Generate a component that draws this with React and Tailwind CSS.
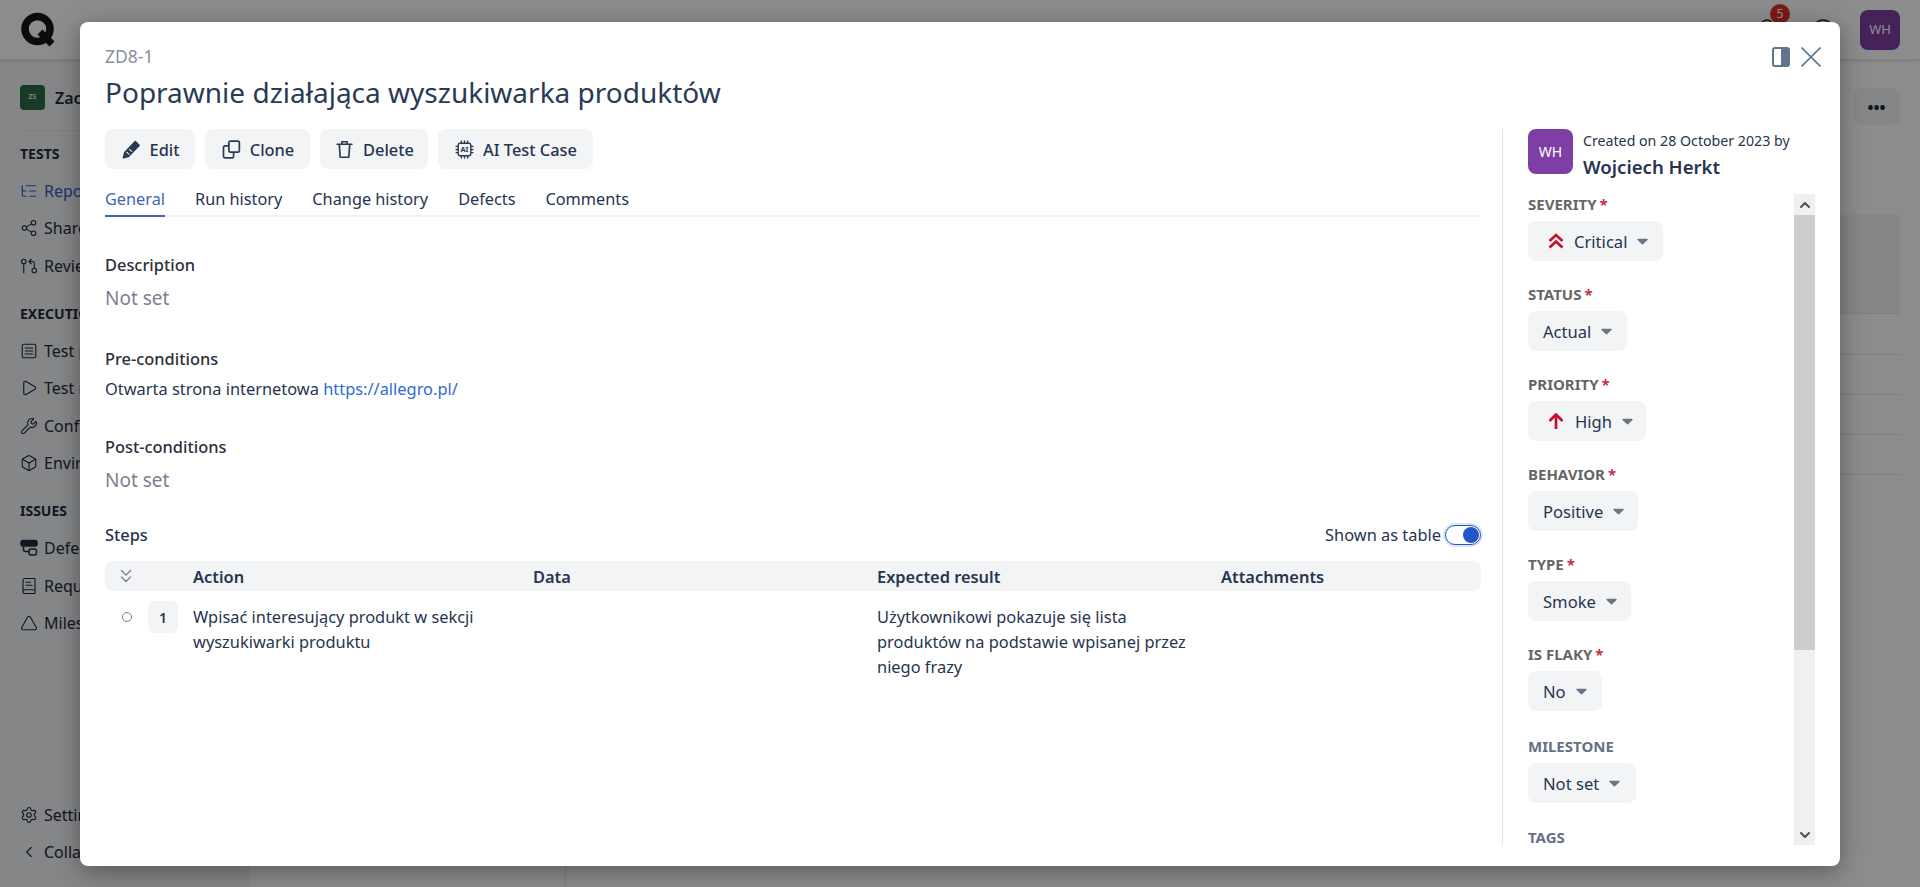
import React from "react";
import {
  ListTree,
  GitPullRequestArrow,
  SquareMenu,
  Play,
  Wrench,
  Box,
  BookText,
  Triangle,
  Settings,
  ChevronLeft,
  ChevronUp,
  ChevronDown,
  ChevronsDown,
  Share2,
  Bell,
  CircleHelp,
} from "lucide-react";

const DefectsIcon = ({ size, strokeWidth }) => (
  <svg width={size} height={size} viewBox="0 0 18 18" fill="none" stroke="currentColor" strokeWidth={strokeWidth}>
    <rect x="1" y="1.5" width="16" height="5.5" rx="2" fill="currentColor" />
    <path d="M3.5 7v3.5a2 2 0 0 0 2 2H9" />
    <rect x="9" y="10" width="7.5" height="6" rx="2" />
  </svg>
);

const navGroups = [
  {
    title: "TESTS",
    items: [
      { label: "Repository", Icon: ListTree, active: true },
      { label: "Shared steps", Icon: Share2 },
      { label: "Review", Icon: GitPullRequestArrow },
    ],
  },
  {
    title: "EXECUTION",
    items: [
      { label: "Test plans", Icon: SquareMenu },
      { label: "Test runs", Icon: Play },
      { label: "Configurations", Icon: Wrench },
      { label: "Environments", Icon: Box },
    ],
  },
  {
    title: "ISSUES",
    items: [
      { label: "Defects", Icon: DefectsIcon },
      { label: "Requirements", Icon: BookText },
      { label: "Milestones", Icon: Triangle },
    ],
  },
];

const fields = [
  { label: "SEVERITY", value: "Critical", required: true, icon: "critical", width: "w-[135px]", gap: "mb-[22px]" },
  { label: "STATUS", value: "Actual", required: true, width: "w-[99px]", gap: "mb-[22px]" },
  { label: "PRIORITY", value: "High", required: true, icon: "high", width: "w-[118px]", gap: "mb-[22px]" },
  { label: "BEHAVIOR", value: "Positive", required: true, width: "w-[110px]", gap: "mb-[22px]" },
  { label: "TYPE", value: "Smoke", required: true, width: "w-[103px]", gap: "mb-[22px]" },
  { label: "IS FLAKY", value: "No", required: true, width: "w-[74px]", gap: "mb-[24px]" },
  { label: "MILESTONE", value: "Not set", width: "w-[108px]", gap: "mb-[23px]" },
];

const QLogo = () => (
  <svg width="36" height="36" viewBox="0 0 36 36" fill="none" stroke="#141414">
    <circle cx="17.5" cy="17" r="12.5" strokeWidth="7.5" />
    <path d="M20 20l12 12" strokeWidth="7" />
  </svg>
);

const PencilIcon = () => (
  <svg width="21" height="21" viewBox="0 0 20 20" fill="none" stroke="#2b3a55" strokeWidth="1.6" strokeLinejoin="round">
    <path d="M13.6 2.4l3.6 3.6L7 16.6 2.4 17.8 3.6 13z" fill="#2b3a55" />
    <path d="M5.2 12.2l2.8 2.8M8 9.6l2.4 2.4" stroke="#f3f4f6" strokeWidth="1" />
  </svg>
);

const CloneIcon = () => (
  <svg width="21" height="21" viewBox="0 0 20 20" fill="none" stroke="#2b3a55" strokeWidth="1.6" strokeLinejoin="round">
    <rect x="7.5" y="2" width="10" height="10.5" rx="1.6" />
    <path d="M7.5 6.5H4a1.6 1.6 0 0 0-1.6 1.6v8.2A1.6 1.6 0 0 0 4 18h6.4a1.6 1.6 0 0 0 1.6-1.6v-3.9" />
  </svg>
);

const TrashIcon = () => (
  <svg width="21" height="21" viewBox="0 0 20 20" fill="none" stroke="#2b3a55" strokeWidth="1.6" strokeLinecap="round" strokeLinejoin="round">
    <path d="M3 5h14M7.5 5V2.6h5V5M5 5l.9 12.4h8.2L15 5" />
  </svg>
);

const ChipIcon = () => (
  <svg width="21" height="21" viewBox="0 0 20 20" fill="none" stroke="#2b3a55" strokeWidth="1.3">
    <rect x="4" y="4" width="12" height="12" rx="2" />
    <path d="M7 1.5V4M10 1.5V4M13 1.5V4M7 16v2.5M10 16v2.5M13 16v2.5M1.5 7H4M1.5 10H4M1.5 13H4M16 7h2.5M16 10h2.5M16 13h2.5" />
    <text x="10" y="12.6" textAnchor="middle" fontSize="7" fontWeight="700" fill="#2b3a55" stroke="none" fontFamily="Noto Sans, sans-serif">AI</text>
  </svg>
);

const CriticalIcon = () => (
  <svg width="16" height="16" viewBox="0 0 16 16" fill="none" stroke="#c8102e" strokeWidth="2.7" className="shrink-0">
    <path d="M1.5 8L8 2l6.5 6M1.5 14.5L8 8.5l6.5 6" />
  </svg>
);

const HighIcon = () => (
  <svg width="16" height="16" viewBox="0 0 16 16" fill="none" stroke="#c8102e" strokeWidth="2.7" className="shrink-0">
    <path d="M8 16V1.5M1.5 8L8 1.5 14.5 8" />
  </svg>
);

const CloseIcon = () => (
  <svg width="20" height="20" viewBox="0 0 20 20" fill="none" stroke="#5f7590" strokeWidth="1.6">
    <path d="M0.5 0.5l19 19M19.5 0.5l-19 19" />
  </svg>
);

const Caret = () => (
  <svg width="11" height="7" viewBox="0 0 11 7" className="shrink-0">
    <path d="M1 0.8h9a.7.7 0 0 1 .5 1.2L6 6.3a.7.7 0 0 1-1 0L.5 2A.7.7 0 0 1 1 .8z" fill="#6b7588" />
  </svg>
);

const ActionButton = ({ icon, label, width }) => (
  <button className={`${width} h-[40px] bg-[#f3f4f6] rounded-lg flex items-center justify-center gap-[8px] text-[16.4px] font-medium text-[#27344f]`}>
    {icon}
    <span className="pt-[2px]">{label}</span>
  </button>
);

const Field = ({ field }) => (
  <div className={field.gap}>
    <div className={`h-[22px] mb-[6px] flex items-center text-[15px] font-bold ${field.required ? "text-[#666666]" : "text-[#667085]"}`}>
      {field.label}
      {field.required && <span className="text-[#c4314b] ml-[3px]">*</span>}
    </div>
    <div className={`${field.width} h-[40px] bg-[#f3f4f6] rounded-lg flex items-center pl-[15px] text-[16.6px] text-[#27344f]`}>
      {field.icon === "critical" && <span className="ml-[5px] mr-[10px] flex"><CriticalIcon /></span>}
      {field.icon === "high" && <span className="ml-[5px] mr-[11px] flex"><HighIcon /></span>}
      <span className="mr-[10px] pt-[2px]">{field.value}</span>
      <Caret />
    </div>
  </div>
);

const Background = () => (
  <div className="absolute inset-0 bg-white flex flex-col">
    <header className="relative h-[60px] shrink-0 border-b border-[#e5e7eb] flex items-center justify-between px-[20px] shadow-sm">
      <QLogo />
      <div className="flex items-center">
        <Bell size={24} strokeWidth={1.5} className="text-[#1f2a40] mr-[32px]" />
        <CircleHelp size={24} strokeWidth={1.5} className="text-[#1f2a40] mr-[25px]" />
        <span className="w-[40px] h-[40px] rounded-lg bg-[#7e3fa5] text-white text-[13px] flex items-center justify-center">WH</span>
      </div>
      <span className="absolute left-[1770px] top-[4px] w-[20px] h-[20px] rounded-full bg-[#e03131] text-white text-[12px] flex items-center justify-center">5</span>
    </header>
    <div className="flex-1 flex min-h-0">
      <aside className="w-[250px] shrink-0 bg-[#f3f4f6] pl-[20px] pt-[25px] flex flex-col text-[#1f2a40]">
        <div className="flex items-center gap-[10px] pb-[20px] -mb-[6px] border-b border-[#e5e7eb] text-[16px] font-semibold">
          <span className="w-[25px] h-[25px] rounded bg-[#2f6b47] text-white text-[7px] flex items-center justify-center">ZS</span>
          Zaczynamy
        </div>
        {navGroups.map((group) => (
          <div key={group.title} className="mt-[19px]">
            <div className="text-[14px] leading-[20px] font-bold mb-[8px]">{group.title}</div>
            {group.items.map(({ label, Icon, active }) => (
              <div key={label} className={`h-[37.6px] flex items-center gap-[6px] text-[16px] ${active ? "text-[#2f5fc0]" : ""}`}>
                <Icon size={18} strokeWidth={1.5} />
                {label}
              </div>
            ))}
          </div>
        ))}
        <div className="mt-auto pb-[17px]">
          <div className="h-[37px] flex items-center gap-[6px] text-[16px]"><Settings size={18} strokeWidth={1.5} />Settings</div>
          <div className="h-[37px] flex items-center gap-[6px] text-[16px]"><ChevronLeft size={18} strokeWidth={1.5} />Collapse</div>
        </div>
      </aside>
      <main className="flex-1 flex justify-end pt-[28px] pr-[20px]">
        <div className="w-[47px] h-[37px] rounded-lg bg-[#f3f4f6] flex items-center justify-center font-bold text-[#1f2a40]">•••</div>
      </main>
    </div>
    <div className="absolute top-[215px] right-[20px] w-[100px] h-[99px] bg-[#f3f4f6] border-b border-[#e5e7eb]" />
    <div className="absolute top-[354px] right-[20px] w-[100px] border-t border-[#e5e7eb]" />
    <div className="absolute top-[394px] right-[20px] w-[100px] border-t border-[#e5e7eb]" />
    <div className="absolute top-[434px] right-[20px] w-[100px] border-t border-[#e5e7eb]" />
    <div className="absolute top-[474px] right-[20px] w-[100px] border-t border-[#e5e7eb]" />
    <div className="absolute top-[860px] left-[565px] h-[27px] border-l border-[#e5e7eb]" />
  </div>
);

const App = () => {
  return (
    <div className="relative w-full h-[887px] overflow-hidden font-['Noto_Sans',sans-serif]">
      <Background />
      <div className="absolute inset-0 bg-black/45" />

      {/* Modal */}
      <div className="absolute left-[80px] top-[22px] w-[1760px] h-[844px] bg-white rounded-lg shadow-[0_6px_24px_rgba(0,0,0,0.35)] px-[25px] pt-[22px] flex flex-col">
        <div className="flex items-start justify-between">
          <div>
            <div className="text-[17.5px] leading-[24px] text-[#8a8f99]">ZD8-1</div>
            <h1 className="text-[28px] leading-[36px] text-[#2b3a55] mt-[6px]">Poprawnie działająca wyszukiwarka produktów</h1>
          </div>
          <div className="flex items-center gap-[11px] pt-[3px] -mr-[6px]">
            <span className="w-[18px] h-[20px] rounded-[3px] border-2 border-[#5f7590] flex justify-end">
              <span className="w-[7px] h-full bg-[#5f7590]" />
            </span>
            <CloseIcon />
          </div>
        </div>

        <div className="flex flex-1 min-h-0 mt-[19px]">
          <div className="w-[1376px] shrink-0">
            <div className="flex gap-[10px]">
              <ActionButton icon={<PencilIcon />} label="Edit" width="w-[90px]" />
              <ActionButton icon={<CloneIcon />} label="Clone" width="w-[105px]" />
              <ActionButton icon={<TrashIcon />} label="Delete" width="w-[108px]" />
              <ActionButton icon={<ChipIcon />} label="AI Test Case" width="w-[155px]" />
            </div>

            <div className="flex gap-[30px] mt-[18px] h-[30px] border-b-2 border-[#f0f1f3] text-[16.3px] text-[#27344f]">
              <span className="text-[#3f66b5] h-[30px] border-b-2 border-[#3f66b5]">General</span>
              <span>Run history</span>
              <span>Change history</span>
              <span>Defects</span>
              <span>Comments</span>
            </div>

            <h3 className="mt-[36px] text-[16.4px] leading-[24px] font-medium text-[#2a2f3a]">Description</h3>
            <p className="mt-[9px] text-[19px] leading-[24px] text-[#7a8090]">Not set</p>

            <h3 className="mt-[37px] text-[16.4px] leading-[24px] font-medium text-[#2a2f3a]">Pre-conditions</h3>
            <p className="mt-[6px] text-[16.4px] leading-[24px] text-[#27344f]">
              Otwarta strona internetowa <a className="text-[#2f6bd1]" href="#">https://allegro.pl/</a>
            </p>

            <h3 className="mt-[34px] text-[16.4px] leading-[24px] font-medium text-[#2a2f3a]">Post-conditions</h3>
            <p className="mt-[9px] text-[19px] leading-[24px] text-[#7a8090]">Not set</p>

            <div className="mt-[31px] flex items-center justify-between h-[24px]">
              <h3 className="text-[16.4px] font-medium text-[#27344f]">Steps</h3>
              <div className="flex items-center gap-[4px] text-[16.4px] text-[#27344f]">
                Shown as table
                <span className="w-[36px] h-[20px] rounded-full bg-white border border-[#2456c9] ring-2 ring-[#dfe6f3] flex items-center justify-end pr-[1px]">
                  <span className="w-[16px] h-[16px] rounded-full bg-[#2456c9]" />
                </span>
              </div>
            </div>

            <div className="mt-[14px] h-[30px] pt-[2px] rounded-lg bg-[#f3f4f6] grid grid-cols-[88px_340px_344px_344px_1fr] items-center text-[16.4px] font-semibold text-[#27344f]">
              <span className="pl-[10px] -mt-[2px]"><ChevronsDown size={22} strokeWidth={1.3} className="text-[#6b7588]" /></span>
              <span>Action</span>
              <span>Data</span>
              <span>Expected result</span>
              <span>Attachments</span>
            </div>

            <div className="grid grid-cols-[88px_340px_344px_344px_1fr] mt-[10px] text-[16.4px] leading-[25px] text-[#27344f]">
              <div className="flex items-start">
                <span className="w-[10px] h-[10px] rounded-full border border-[#7a8090] ml-[17px] mt-[11px]" />
                <span className="w-[30px] h-[32px] rounded-md bg-[#f3f4f6] ml-[16px] flex items-center justify-center text-[14px] font-semibold">1</span>
              </div>
              <div className="pt-[3px] pr-[24px]">Wpisać interesujący produkt w sekcji wyszukiwarki produktu</div>
              <div />
              <div className="pt-[3px] pr-[24px]">Użytkownikowi pokazuje się lista produktów na podstawie wpisanej przez niego frazy</div>
              <div />
            </div>
          </div>

          {/* Right panel */}
          <div className="flex-1 ml-[21px] mb-[21px] border-l border-[#e3e5e8] pl-[25px] flex flex-col min-h-0">
            <div className="flex gap-[10px] h-[45px]">
              <span className="w-[45px] h-[45px] rounded-lg bg-[#7e3fa5] text-white text-[14px] flex items-center justify-center">WH</span>
              <div className="pt-[2px]">
                <div className="text-[14.2px] leading-[20px] text-[#27344f]">Created on 28 October 2023 by</div>
                <div className="text-[18.6px] leading-[26px] font-semibold text-[#27344f] mt-[3px]">Wojciech Herkt</div>
              </div>
            </div>
            <div className="flex flex-1 min-h-0 mt-[20px] overflow-hidden">
              <div className="flex-1 overflow-hidden">
                <div className="-mt-[1px]">
                  {fields.map((field) => (
                    <Field key={field.label} field={field} />
                  ))}
                  <div className="h-[22px] flex items-center text-[15px] font-bold text-[#667085]">TAGS</div>
                </div>
              </div>
              <div className="w-[21px] bg-[#f0f0f0] flex flex-col shrink-0">
                <div className="h-[21px] flex items-center justify-center"><ChevronUp size={16} strokeWidth={3} className="text-[#505050]" /></div>
                <div className="h-[435px] bg-[#cdcdcd]" />
                <div className="mt-auto h-[21px] flex items-center justify-center"><ChevronDown size={16} strokeWidth={3} className="text-[#505050]" /></div>
              </div>
            </div>
          </div>
        </div>
      </div>
    </div>
  );
};

export default App;
